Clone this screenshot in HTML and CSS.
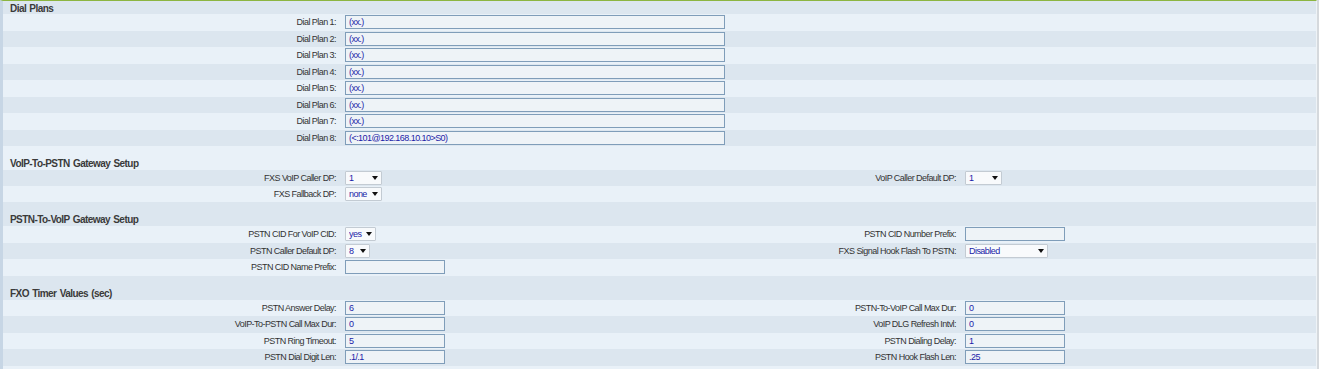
FILE: index.html
```html
<!DOCTYPE html>
<html lang="en">
<head>
    <meta charset="UTF-8">
    <title>Voice - Line</title>
    <link rel="stylesheet" href="styles.css">
</head>
<body>

<div class="panel">
    <div class="head first">Dial Plans</div>
    <div class="row">
        <label class="lbl">Dial Plan 1:</label>
        <div class="val"><input class="txt wide" value="(xx.)"></div>
    </div>
    <div class="row">
        <label class="lbl">Dial Plan 2:</label>
        <div class="val"><input class="txt wide" value="(xx.)"></div>
    </div>
    <div class="row">
        <label class="lbl">Dial Plan 3:</label>
        <div class="val"><input class="txt wide" value="(xx.)"></div>
    </div>
    <div class="row">
        <label class="lbl">Dial Plan 4:</label>
        <div class="val"><input class="txt wide" value="(xx.)"></div>
    </div>
    <div class="row">
        <label class="lbl">Dial Plan 5:</label>
        <div class="val"><input class="txt wide" value="(xx.)"></div>
    </div>
    <div class="row">
        <label class="lbl">Dial Plan 6:</label>
        <div class="val"><input class="txt wide" value="(xx.)"></div>
    </div>
    <div class="row">
        <label class="lbl">Dial Plan 7:</label>
        <div class="val"><input class="txt wide" value="(xx.)"></div>
    </div>
    <div class="row">
        <label class="lbl">Dial Plan 8:</label>
        <div class="val"><input class="txt wide" value="(&lt;:101@192.168.10.10&gt;S0)"></div>
    </div>

    <div class="head">VoIP-To-PSTN Gateway Setup</div>
    <div class="row sel">
        <label class="lbl">FXS VoIP Caller DP:</label>
        <div class="val"><span class="dd"><select class="s36"><option>1</option></select></span></div>
        <label class="lbl">VoIP Caller Default DP:</label>
        <div class="val"><span class="dd"><select class="s36"><option>1</option></select></span></div>
    </div>
    <div class="row sel">
        <label class="lbl">FXS Fallback DP:</label>
        <div class="val"><span class="dd"><select class="s36"><option>none</option></select></span></div>
    </div>

    <div class="head">PSTN-To-VoIP Gateway Setup</div>
    <div class="row">
        <label class="lbl">PSTN CID For VoIP CID:</label>
        <div class="val"><span class="dd"><select class="s30"><option>yes</option></select></span></div>
        <label class="lbl">PSTN CID Number Prefix:</label>
        <div class="val"><input class="txt" value=""></div>
    </div>
    <div class="row">
        <label class="lbl">PSTN Caller Default DP:</label>
        <div class="val"><span class="dd"><select class="s24"><option>8</option></select></span></div>
        <label class="lbl">FXS Signal Hook Flash To PSTN:</label>
        <div class="val"><span class="dd"><select class="s82"><option>Disabled</option></select></span></div>
    </div>
    <div class="row">
        <label class="lbl">PSTN CID Name Prefix:</label>
        <div class="val"><input class="txt" value=""></div>
    </div>

    <div class="head">FXO Timer Values (sec)</div>
    <div class="row">
        <label class="lbl">PSTN Answer Delay:</label>
        <div class="val"><input class="txt" value="6"></div>
        <label class="lbl">PSTN-To-VoIP Call Max Dur:</label>
        <div class="val"><input class="txt" value="0"></div>
    </div>
    <div class="row">
        <label class="lbl">VoIP-To-PSTN Call Max Dur:</label>
        <div class="val"><input class="txt" value="0"></div>
        <label class="lbl">VoIP DLG Refresh Intvl:</label>
        <div class="val"><input class="txt" value="0"></div>
    </div>
    <div class="row">
        <label class="lbl">PSTN Ring Timeout:</label>
        <div class="val"><input class="txt" value="5"></div>
        <label class="lbl">PSTN Dialing Delay:</label>
        <div class="val"><input class="txt" value="1"></div>
    </div>
    <div class="row">
        <label class="lbl">PSTN Dial Digit Len:</label>
        <div class="val"><input class="txt" value=".1/.1"></div>
        <label class="lbl">PSTN Hook Flash Len:</label>
        <div class="val"><input class="txt" value=".25"></div>
    </div>
</div>

</body>
</html>
```

FILE: styles.css
```css
body {
    margin: 0;
    padding: 0;
    background-color: #d5d9dd;
    font-family: "Liberation Sans", Arial, sans-serif;
    color: #333;
}

.panel {
    width: 1313px;
    border-top: 1px solid #8cb540;
    border-left: 3px solid #c7d6e5;
    border-right: 1px solid #eef3f7;
    height: 368px;
    overflow: hidden;
    background-color: #e9f1f8;
}

.panel > div:nth-child(odd) {
    background-color: #dce6ef;
}

.panel > div:nth-child(even) {
    background-color: #e9f1f8;
}

.head {
    height: 24px;
    box-sizing: border-box;
    padding: 13px 0 0 7px;
    font-size: 10px;
    font-weight: bold;
    letter-spacing: -0.55px;
    word-spacing: 1px;
    line-height: 10px;
    color: #3a3a3a;
}

.head.first {
    height: 13px;
    padding-top: 3px;
}

.row {
    display: grid;
    grid-template-columns: 342px 380px 240px 1fr;
    align-items: center;
    height: 16.5px;
}

.row.sel {
    height: 16px;
}

.lbl {
    text-align: right;
    padding-right: 9px;
    font-size: 9px;
    letter-spacing: -0.55px;
    color: #333;
    white-space: nowrap;
}

.val {
    display: flex;
    align-items: center;
}

.txt {
    box-sizing: border-box;
    width: 100px;
    height: 14px;
    margin: 0;
    padding: 0 0 0 3px;
    border: 1px solid #7f9db9;
    background-color: #eef3f7;
    font-family: "Liberation Sans", Arial, sans-serif;
    font-size: 9px;
    letter-spacing: -0.55px;
    color: #1c1ca8;
    outline: none;
}

.txt.wide {
    width: 380px;
}

.dd {
    position: relative;
    display: inline-flex;
    height: 14px;
}

.dd::after {
    content: "";
    position: absolute;
    right: 4px;
    top: 5px;
    border-left: 3.5px solid transparent;
    border-right: 3.5px solid transparent;
    border-top: 4px solid #111;
    pointer-events: none;
}

.dd select {
    -webkit-appearance: none;
    appearance: none;
    box-sizing: border-box;
    height: 14px;
    margin: 0;
    padding: 0 0 0 3px;
    border: 1px solid #c3cbd3;
    border-radius: 1px;
    background-color: #f8fafc;
    font-family: "Liberation Sans", Arial, sans-serif;
    font-size: 9px;
    letter-spacing: -0.55px;
    line-height: 12px;
    color: #1c1ca8;
}

.s36 { width: 37px; }
.s30 { width: 31px; }
.s24 { width: 25px; }
.s82 { width: 83px; }
```
